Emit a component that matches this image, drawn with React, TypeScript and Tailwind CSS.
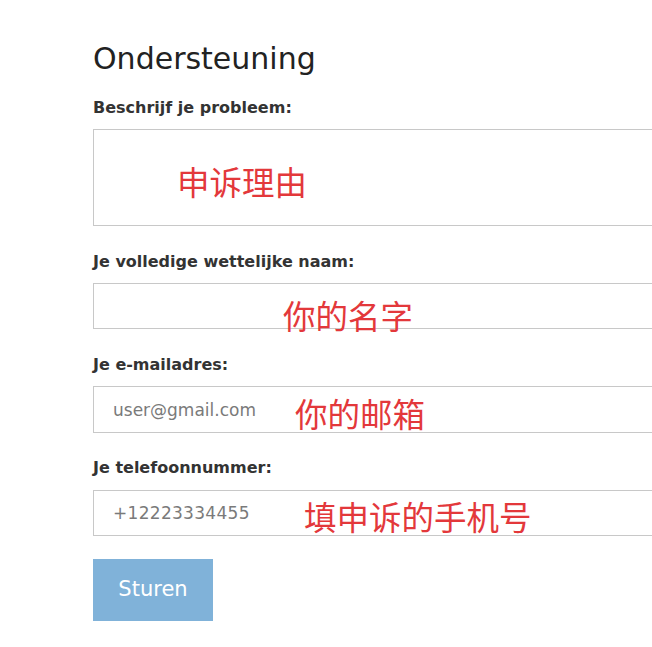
import React from "react";

const sans = "font-['DejaVu_Sans','Open_Sans',sans-serif]";
const cjk = "font-['Noto_Sans_CJK_SC',sans-serif]";

function Note({ text, className }: { text: string; className: string }) {
  return (
    <span
      className={`pointer-events-none absolute ${cjk} text-[32.5px] leading-none text-[#e3383b] ${className}`}
    >
      {text}
    </span>
  );
}

export default function App() {
  return (
    <div className={`relative min-h-[647px] w-full overflow-hidden bg-white ${sans} text-[#333]`}>
      <div className="w-[600px] pl-[93px] pt-[40px]">
        <h1 className="text-[30px] font-normal leading-[38px] text-[#222]">Ondersteuning</h1>

        <form className="mt-[20px] flex flex-col">
          <label className="text-[16px] font-bold leading-[20px] text-[#333]">Beschrijf je probleem:</label>
          <textarea className="mt-[11px] h-[97px] w-[600px] resize-none border border-[#c8c8c8] bg-white outline-none" />

          <label className="mt-[26px] text-[16px] font-bold leading-[20px] text-[#333]">
            Je volledige wettelijke naam:
          </label>
          <input className="mt-[11px] h-[46px] w-[600px] border border-[#c8c8c8] bg-white outline-none" />

          <label className="mt-[26px] text-[16px] font-bold leading-[20px] text-[#333]">Je e-mailadres:</label>
          <input
            placeholder="user@gmail.com"
            className="mt-[11px] h-[47px] w-[600px] border border-[#c8c8c8] bg-white px-[19px] text-[17px] outline-none placeholder:text-[#7a7a7a]"
          />

          <label className="mt-[25px] text-[16px] font-bold leading-[20px] text-[#333]">Je telefoonnummer:</label>
          <input
            placeholder="+12223334455"
            className="mt-[12px] h-[46px] w-[600px] border border-[#c8c8c8] bg-white px-[19px] text-[17px] tracking-[0.3px] outline-none placeholder:text-[#7a7a7a]"
          />

          <button
            type="button"
            className="mt-[23px] h-[62px] w-[120px] bg-[#80b2d9] text-[21px] text-white"
          >
            Sturen
          </button>
        </form>
      </div>

      <Note text="申诉理由" className="left-[177px] top-[165px]" />
      <Note text="你的名字" className="left-[283px] top-[299px]" />
      <Note text="你的邮箱" className="left-[295px] top-[397px]" />
      <Note text="填申诉的手机号" className="left-[304px] top-[500px]" />
    </div>
  );
}
